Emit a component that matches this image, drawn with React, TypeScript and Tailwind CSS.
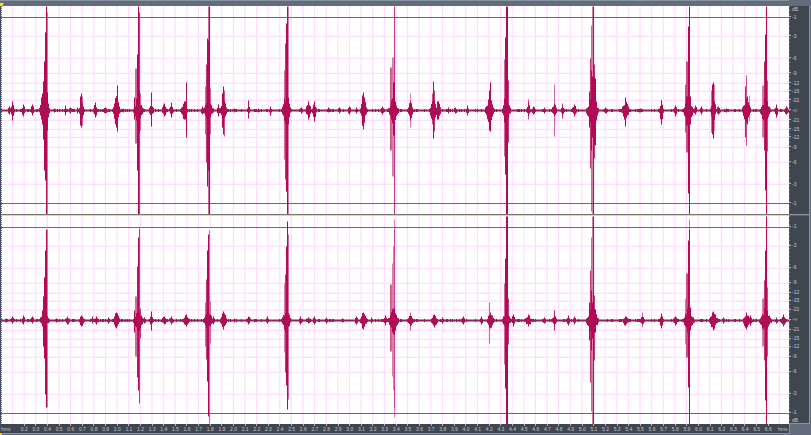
type Channel = "left" | "right";

// x, peak above the centre line, peak below it, opacity
type Spike = [number, number, number, number?];

// centre x, half width, peak above, peak below
type Burst = [number, number, number, number];

const HALF = 104;
const LEVELS = [10, 19, 27, 37, 52, 74];
const LIMIT = 93;
const STEP = 11.62;

const DB_LABELS = ["-1", "-3", "-6", "-9", "-12", "-15", "-21", "-∞", "-21", "-15", "-12", "-9", "-6", "-3", "-1"];

const TIME_LABELS = Array.from({ length: 65 }, (_, i) => ((i + 2) / 10).toFixed(1));

const SPIKES: Record<Channel, Spike[]> = {
  left: [
    [40, 5, 5], [41, 13, 9], [42, 17, 14], [43, 29, 29], [44, 49, 60], [45, 78, 70], [46, 104, 104], [47, 98, 104, 0.5], [47, 18, 20], [48, 7, 7],
    [134, 13, 9], [135, 42, 33, 0.6], [136, 42, 33, 0.6], [136, 12, 10], [137, 56, 60], [138, 104, 104], [139, 98, 104, 0.8], [139, 20, 22], [140, 17, 20, 0.6],
    [205, 24, 24, 0.6], [206, 46, 52, 0.8], [207, 72, 76], [208, 104, 104, 0.6], [208, 70, 60], [209, 104, 104], [210, 22, 24, 0.6],
    [284, 40, 49, 0.6], [285, 67, 69, 0.8], [286, 87, 81], [287, 104, 104], [288, 104, 104, 0.5], [284, 12, 10], [288, 13, 14],
    [390, 43, 40, 0.7], [391, 43, 40, 0.6], [392, 53, 66, 0.5], [393, 53, 66, 0.5], [393, 28, 25], [394, 104, 104, 0.8], [394, 28, 25], [391, 10, 9], [392, 12, 13], [395, 9, 9],
    [504, 51, 46, 0.6], [505, 73, 64], [506, 104, 104], [507, 104, 104], [508, 30, 32, 0.8], [504, 12, 12],
    [589, 19, 17], [590, 52, 58, 0.8], [591, 85, 101, 0.6], [591, 40, 40], [592, 104, 104, 0.5], [592, 34, 27], [593, 104, 104], [594, 46, 48, 0.8], [594, 34, 34], [595, 32, 35], [596, 9, 10],
    [685, 26, 22, 0.7], [686, 49, 42, 0.7], [687, 49, 42, 0.7], [686, 14, 15], [687, 14, 15], [688, 84, 83], [689, 104, 104], [690, 14, 14],
    [762, 25, 27, 0.5], [763, 25, 27, 0.6], [764, 49, 40, 0.9], [765, 76, 80], [766, 104, 104], [767, 30, 41, 0.7],
    [151, 18, 16], [186, 28, 27], [185, 9, 9], [184, 8, 8], [248, 10, 8], [222, 17, 17], [223, 24, 24], [224, 20, 26, 0.7],
    [80, 14, 15], [81, 17, 17], [82, 14, 15, 0.6],
    [410, 17, 17, 0.5], [433, 29, 28], [434, 20, 21, 0.8], [432, 17, 14, 0.7], [437, 9, 9], [438, 7, 7],
    [489, 20, 20], [490, 28, 21], [491, 10, 9], [528, 11, 9, 0.7], [554, 26, 26, 0.6], [562, 7, 8, 0.8],
    [625, 13, 16], [661, 10, 14], [711, 20, 22, 0.6], [712, 26, 24], [713, 28, 28], [714, 26, 20, 0.5],
    [745, 24, 27, 0.9], [746, 35, 35, 0.7], [747, 14, 14], [749, 15, 11, 0.5], [117, 25, 21], [116, 14, 17], [115, 11, 12],
  ],
  right: [
    [42, 10, 6], [43, 24, 26], [44, 43, 38], [45, 70, 74], [46, 91, 87], [47, 91, 87, 0.5],
    [134, 10, 12], [135, 24, 36, 0.6], [136, 24, 36, 0.6], [137, 54, 57, 0.9], [138, 83, 70], [139, 92, 83, 0.8], [140, 12, 18, 0.8],
    [205, 18, 26, 0.6], [206, 41, 39, 0.8], [207, 70, 61], [208, 86, 96], [209, 90, 103, 0.6], [210, 19, 23, 0.6],
    [284, 37, 32, 0.5], [285, 46, 52, 0.8], [286, 74, 65], [287, 99, 89], [288, 86, 79, 0.6],
    [390, 36, 31, 0.7], [391, 36, 31, 0.6], [392, 57, 56, 0.5], [393, 74, 70, 0.5], [394, 101, 97, 0.5], [394, 91, 88, 0.5], [393, 12, 14], [394, 12, 14],
    [504, 37, 44, 0.6], [505, 62, 68], [506, 104, 104], [507, 104, 104], [508, 22, 24, 0.8],
    [589, 18, 20], [590, 50, 62, 0.8], [591, 83, 91, 0.6], [591, 30, 30], [592, 104, 104, 0.5], [592, 18, 18], [593, 104, 104], [594, 25, 40, 0.8], [595, 11, 12],
    [685, 22, 24, 0.5], [686, 47, 37, 0.7], [687, 47, 37, 0.7], [687, 12, 12], [688, 80, 67], [689, 91, 104], [689, 101, 104, 0.6], [690, 13, 10],
    [762, 22, 26, 0.5], [763, 22, 26, 0.6], [764, 40, 40, 0.8], [765, 70, 80], [766, 104, 104], [767, 33, 36, 0.7],
    [151, 9, 10], [410, 8, 10, 0.6], [489, 18, 23, 0.6], [554, 10, 10, 0.9], [642, 8, 7, 0.6],
  ],
};

const BURSTS: Record<Channel, Burst[]> = {
  left: [
    [12, 2, 9, 10], [9, 2, 4, 4], [23, 2, 6, 6], [32, 2, 6, 5], [54, 3, 2, 2], [65, 1, 5, 5], [70, 2, 3, 3], [77, 1, 3, 3], [81, 3, 9, 9], [95, 2, 8, 7],
    [105, 3, 3, 3], [116, 4, 14, 16], [123, 4, 2, 2], [151, 3, 6, 6], [164, 3, 7, 6], [171, 2, 8, 7], [184, 4, 9, 9], [202, 2, 4, 4],
    [218, 1, 6, 6], [223, 4, 12, 12], [234, 4, 2, 2], [248, 2, 5, 4], [258, 2, 2, 2], [270, 1, 4, 5], [301, 2, 3, 3], [308, 3, 9, 9], [314, 2, 9, 11],
    [328, 2, 3, 2], [339, 3, 3, 3], [349, 2, 4, 4], [356, 1, 3, 3], [363, 3, 18, 19], [382, 3, 4, 4], [410, 3, 9, 10], [433, 4, 13, 14], [438, 3, 9, 9],
    [448, 1, 3, 3], [455, 3, 3, 3], [467, 1, 5, 5], [477, 1, 2, 2], [489, 5, 12, 14], [528, 2, 8, 6], [533, 3, 4, 4], [544, 1, 3, 3], [554, 3, 7, 6],
    [562, 2, 4, 5], [574, 3, 6, 6], [605, 4, 3, 3], [625, 5, 9, 9], [640, 4, 2, 2], [661, 2, 10, 14], [675, 2, 5, 6], [695, 2, 5, 4], [701, 2, 4, 4],
    [713, 3, 14, 13], [718, 3, 4, 4], [726, 2, 2, 2], [746, 5, 12, 12], [776, 2, 6, 7], [786, 3, 4, 4],
    [44, 6, 14, 12], [138, 6, 10, 10], [208, 6, 10, 10], [286, 5, 14, 14], [393, 6, 11, 12], [506, 5, 11, 11], [592, 7, 14, 16], [688, 6, 12, 14], [765, 6, 12, 14],
  ],
  right: [
    [6, 3, 2, 2], [12, 3, 4, 3], [23, 2, 5, 4], [32, 2, 4, 3], [56, 2, 2, 2], [67, 3, 4, 4], [81, 3, 5, 6], [92, 1, 4, 3], [96, 3, 4, 4], [108, 2, 3, 3], [116, 4, 8, 8],
    [144, 2, 3, 3], [151, 2, 6, 6], [164, 4, 4, 4], [171, 3, 4, 4], [186, 4, 6, 6], [213, 2, 4, 4], [223, 4, 9, 9], [234, 2, 2, 2], [248, 3, 4, 4],
    [267, 2, 4, 3], [300, 2, 4, 4], [308, 4, 3, 3], [314, 2, 4, 4], [326, 2, 3, 3], [342, 3, 2, 2], [356, 2, 4, 4], [363, 4, 8, 9], [371, 1, 3, 3],
    [385, 2, 5, 5], [410, 4, 5, 6], [434, 4, 6, 7], [442, 2, 3, 3], [463, 2, 4, 4], [481, 2, 4, 4], [490, 4, 8, 8], [513, 2, 6, 6], [528, 4, 6, 6],
    [544, 2, 3, 3], [554, 3, 5, 5], [568, 2, 5, 5], [574, 2, 4, 4], [625, 4, 4, 5], [642, 3, 4, 4], [661, 2, 7, 8], [675, 3, 4, 5], [693, 2, 3, 3],
    [713, 5, 9, 10], [723, 2, 3, 3], [746, 4, 8, 9], [750, 2, 5, 5], [776, 2, 3, 3], [783, 3, 6, 6],
    [44, 6, 8, 7], [138, 6, 9, 10], [208, 6, 9, 9], [286, 5, 12, 12], [393, 6, 12, 13], [506, 5, 9, 9], [592, 7, 14, 15], [688, 6, 12, 12], [765, 7, 12, 12],
  ],
};

const noiseAt = (n: number) => Math.abs(Math.sin(n * 12.9898) * 43758.5453) % 1;

// One closed bar per pixel column, tapering unevenly away from each burst's centre
function envelopePath(bursts: Burst[]): string {
  let d = "";
  for (let x = 1; x < 789; x++) {
    let up = noiseAt(x) > 0.7 ? 1.5 : 1;
    let down = up;
    for (const [cx, half, top, bottom] of bursts) {
      const k = 1 - Math.abs(x - cx) / (half + 1);
      if (k <= 0) continue;
      const taper = Math.pow(k, 1.4);
      const upJitter = x === cx ? 1 : 0.7 + 0.6 * noiseAt(x + 0.3);
      const downJitter = x === cx ? 1 : 0.7 + 0.6 * noiseAt(x + 0.6);
      up = Math.max(up, top * taper * upJitter);
      down = Math.max(down, bottom * taper * downJitter);
    }
    d += `M${x} ${-up}h1V${down}h-1z`;
  }
  return d;
}

function Waveform({ channel }: { channel: Channel }) {
  return (
    <svg
      className="block h-0 min-h-0 w-full flex-1 bg-white"
      viewBox={`1 ${-HALF} 788 ${HALF * 2}`}
      preserveAspectRatio="none"
      role="img"
      aria-label={`${channel} channel`}
    >
      {Array.from({ length: 67 }, (_, i) => (
        <rect key={i} x={0.9 + (i + 1) * STEP - 0.6} y={-HALF} width={1.2} height={HALF * 2} fill="#ffdcff" />
      ))}
      {LEVELS.flatMap((l) => [-l, l]).map((y) => (
        <rect key={y} x={1} y={y - 0.3} width={788} height={1.2} fill="#ffdcff" />
      ))}
      <rect x={1} y={-LIMIT} width={788} height={1} fill="#6c6c70" />
      <rect x={1} y={LIMIT} width={788} height={1} fill="#6c6c70" />
      <g fill="#b50855">
        <g transform="translate(0 0.5)">
          <path d={envelopePath(BURSTS[channel])} />
          {SPIKES[channel].map(([x, up, down, opacity = 1], i) => (
            <rect key={i} x={x} y={-up} width={1} height={up + down} opacity={opacity} />
          ))}
        </g>
      </g>
      <rect x={1} y={0} width={788} height={1} fill="#8c2c5c" opacity={0.6} />
      <path d={`M1.5 ${-HALF}V${HALF}`} stroke="#6b6b9c" strokeDasharray="1 1" />
    </svg>
  );
}

function DbScale({ unit }: { unit: "top" | "bottom" }) {
  return (
    <div className="relative grid min-h-0 flex-1 grid-rows-[11fr_19fr_22fr_15fr_10fr_8fr_9fr_10fr_10fr_9fr_8fr_10fr_15fr_22fr_19fr_11fr] bg-[#3f4650] text-[5px] leading-[6px] text-[#c4c7cc]">
      <svg className="absolute inset-y-0 left-0 h-full w-px" viewBox="0 0 1 208" preserveAspectRatio="none" aria-hidden="true">
        <path d="M.5 0V208" stroke="#8d949d" strokeDasharray="1 3" />
      </svg>
      <div className="min-h-0 pl-[3px]">{unit === "top" && "dB"}</div>
      {DB_LABELS.map((label, i) => (
        <div key={i} className="flex h-0 items-center gap-px">
          <span className="h-px w-[2px] bg-[#b4b8be]" />
          <span>{label}</span>
        </div>
      ))}
      {unit === "bottom" && <div className="absolute bottom-0 left-[3px]">dB</div>}
    </div>
  );
}

function TimeRuler() {
  return (
    <div className="flex h-[10px] min-w-0 flex-1 border-b border-[#8993a0] bg-[#3f4650] pl-px text-[5px] leading-[6px] text-[#c4c7cc]">
      <div className="w-0 grow-[174]">
        <div className="pt-[2px]">hms</div>
      </div>
      {TIME_LABELS.map((label) => (
        <div key={label} className="flex w-0 grow-[116] flex-col items-center">
          <span className="h-[2px] w-px shrink-0 bg-[#b4b8be]" />
          <span>{label}</span>
        </div>
      ))}
      <div className="w-0 grow-[153]">
        <div className="pt-[2px] pl-[4px]">hms</div>
      </div>
    </div>
  );
}

function Marker({ flipped = false }: { flipped?: boolean }) {
  return (
    <svg
      className={flipped ? "absolute bottom-0 left-0 h-[2px] w-[3px]" : "absolute bottom-0 left-0 h-[3px] w-[4px]"}
      viewBox="0 0 4 3"
      preserveAspectRatio="none"
      aria-hidden="true"
    >
      <path d={flipped ? "M0 0h1l2 3H0z" : "M0 0h4L2 3H0z"} fill="#f2ee00" />
    </svg>
  );
}

export default function App() {
  return (
    <div className="flex h-screen flex-col overflow-hidden bg-[#636c7c] font-['Liberation_Sans',sans-serif]">
      <div className="relative h-[6px] shrink-0 pr-[22px]">
        <div className="h-px bg-[#8993a0]" />
        <Marker />
      </div>
      <main className="flex min-h-0 flex-1">
        <div className="flex min-w-0 flex-1 flex-col border-l border-[#454a68]">
          <Waveform channel="left" />
          <div className="h-[2px] shrink-0 border-t border-[#7d766b] bg-[#d8d2c6]" />
          <Waveform channel="right" />
        </div>
        <div className="flex w-[21px] shrink-0 flex-col border-r border-b border-[#8993a0]">
          <DbScale unit="top" />
          <div className="h-[2px] shrink-0 border-t border-[#8993a0] bg-[#596270]" />
          <DbScale unit="bottom" />
        </div>
        <div className="w-px shrink-0" />
      </main>
      <div className="relative flex shrink-0 pb-px">
        <TimeRuler />
        <div className="w-[22px] shrink-0 border-l border-[#8993a0]" />
        <Marker flipped />
      </div>
    </div>
  );
}
